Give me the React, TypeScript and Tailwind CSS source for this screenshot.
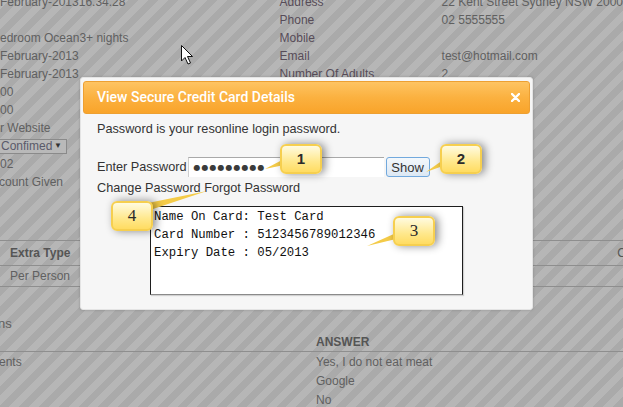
const leftRows = [
  'February-201316.34.28',
  '',
  'edroom Ocean3+ nights',
  'February-2013',
  'February-2013',
  '00',
  '00',
  'r Website',
  '__select__',
  '02',
  'count Given',
];

const detailRows: [string, string][] = [
  ['Address', '22 Kent Street Sydney NSW 2000'],
  ['Phone', '02 5555555'],
  ['Mobile', ''],
  ['Email', 'test@hotmail.com'],
  ['Number Of Adults', '2'],
  ['Number Of Children', '0'],
  ['Special Requests', ''],
  ['Arrival Details', 'Arriving at 2.pm'],
  ['Comments', 'None to display'],
];

const answers: [string, string][] = [
  ['Dietary Requirements', 'Yes, I do not eat meat'],
  ['', 'Google'],
  ['', 'No'],
];

function Callout({ n, serif, className }: { n: string; serif?: boolean; className: string }) {
  return (
    <div
      className={`absolute flex h-[30px] w-[42px] items-center justify-center rounded-[6px] border-2 border-[#f6cf4f] bg-[linear-gradient(#fffbe0,#ffe88c_60%,#ffdc62)] text-[#2b2b2b] shadow-[3px_0px_8px_rgba(0,0,0,0.45)] ${className} ${
        serif ? "font-['Liberation_Serif',serif] text-[17px]" : "font-['Liberation_Sans',sans-serif] text-[15px] font-bold"
      }`}
    >
      {n}
    </div>
  );
}

export default function App() {
  return (
    <div className="relative h-[407px] w-[623px] overflow-hidden bg-[repeating-linear-gradient(135deg,#b6b6b6_0px,#b6b6b6_7px,#aaaaaa_7px,#aaaaaa_14px)] font-['Liberation_Sans',Arial,sans-serif] text-[12px] text-[#606060]">
      {/* page behind the dialog */}
      <div className="mt-[-7px] flex">
        <div className="w-[335px]">
          {leftRows.map((row, i) =>
            row === '__select__' ? (
              <div key={i} className="flex h-[18px] items-center">
                <div className="ml-[-3px] flex h-[15px] w-[70px] items-center justify-between border border-[#8a8a8a] bg-[#b9b9b9] pl-[3px] pr-[4px] text-[#5a5a6a]">
                  <span>Confimed</span>
                  <span className="text-[8px] text-[#333]">▼</span>
                </div>
              </div>
            ) : (
              <div key={i} className={`h-[18px] leading-[18px] ${i === 10 ? 'ml-[-1px]' : ''}`}>
                {row}
              </div>
            ),
          )}
        </div>
        <div className="flex-1">
          {detailRows.map(([label, value]) => (
            <div key={label} className="flex h-[18px] leading-[18px]">
              <div className="w-[162px] text-[#574c58]">{label}</div>
              <div className="whitespace-nowrap">{value}</div>
            </div>
          ))}
        </div>
      </div>

      <div className="mt-[49px] border-t border-[#8e8e8e]">
        <div className="flex h-[25px] items-center justify-between border-b border-[#8e8e8e] pl-[10px] font-bold text-[#555]">
          <span>Extra Type</span>
          <span className="mr-[-19px] font-normal">Cost</span>
        </div>
        <div className="flex h-[21px] items-center border-b border-[#8e8e8e] pl-[10px]">Per Person</div>
      </div>

      <div className="mt-[28px] ml-[-2px] h-[18px] text-[13px] leading-[18px]">ns</div>
      <div className="flex h-[19px] items-center border-b border-[#8e8e8e]">
        <span className="ml-[316px] font-bold text-[#555]">ANSWER</span>
      </div>
      {answers.map(([q, a], i) => (
        <div key={i} className="flex h-[19px] items-center">
          <div className="w-[316px] overflow-hidden">
            <span className={q ? 'ml-[-1px]' : ''}>{q ? 'ents' : ''}</span>
          </div>
          <div>{a}</div>
        </div>
      ))}

      {/* dialog */}
      <div className="absolute left-[80px] top-[77px] flex h-[233px] w-[453px] flex-col rounded-[3px] border border-[#e4e4e4] bg-[#f6f6f6] shadow-[0_0_3px_rgba(0,0,0,0.2)]">
        <div className="mx-[2px] mt-[3px] flex h-[33px] items-center justify-between rounded-[3px] border border-[#eda032] bg-[linear-gradient(#fec462,#fbb140_50%,#f9a42a)] pl-[13px] pr-[9px]">
          <span className="font-['Roboto',sans-serif] text-[14px] font-medium text-white">View Secure Credit Card Details</span>
          <svg width="9" height="9" viewBox="0 0 9 9">
            <path d="M1 1L8 8M8 1L1 8" stroke="#fff" strokeWidth="2.4" strokeLinecap="round" />
          </svg>
        </div>
        <div className="px-[16px] text-[12.7px] leading-[16px] text-[#333]">
          <p className="mt-[7px]">Password is your resonline login password.</p>
          <div className="mt-[20px] flex h-[20px] items-center">
            <span>Enter Password</span>
            <div className="ml-[1px] flex h-[20px] w-[196px] items-center border-t border-l border-t-[#a9a9a9] border-l-[#cfcfcf] bg-white pl-[5px] text-[#3b3b3b]">
              {Array.from({ length: 9 }).map((_, i) => (
                <span key={i} className="w-[8px] font-['DejaVu_Sans',sans-serif] text-[8px] leading-none">●</span>
              ))}
            </div>
            <button className="ml-[2px] h-[20px] w-[44px] rounded-[3px] border border-[#72a9dd] bg-[linear-gradient(#f4f8fc,#dce8f4)] text-[13px] leading-none text-[#333]">
              Show
            </button>
          </div>
          <p className="mt-[3px]">Change Password Forgot Password</p>
        </div>
        <div className="mx-auto mt-[10px] h-[89px] w-[313px] border border-[#1e1e1e] border-b-[#8a8a8a] bg-white pl-[3px] pt-[1px] font-['Liberation_Mono',monospace] text-[12.3px] leading-[18px] text-[#111] shadow-[1px_1px_1px_rgba(0,0,0,0.15)]">
          <div>Name On Card: Test Card</div>
          <div>Card Number : 5123456789012346</div>
          <div>Expiry Date : 05/2013</div>
        </div>
      </div>

      {/* annotation tails and cursor */}
      <svg className="pointer-events-none absolute inset-0" width="623" height="407">
        <polygon points="284,159 284,165 265,169" fill="#f4cb48" />
        <polygon points="443,160 443,166 426,172" fill="#f4cb48" />
        <polygon points="396,233 396,239 367,246" fill="#f4cb48" />
        <polygon points="148,203 153,209 207,191" fill="#f4cb48" />
        <path d="M181.5 45.5 L181.5 61 L185 57.5 L188 64 L190.5 63 L187.5 56.5 L192.5 56.5 Z" fill="#fff" stroke="#111" strokeWidth="1" />
      </svg>

      <Callout n="1" className="left-[280px] top-[144px]" />
      <Callout n="2" className="left-[440px] top-[144px]" />
      <Callout n="3" serif className="left-[393px] top-[216px]" />
      <Callout n="4" serif className="left-[111px] top-[201px]" />
    </div>
  );
}
